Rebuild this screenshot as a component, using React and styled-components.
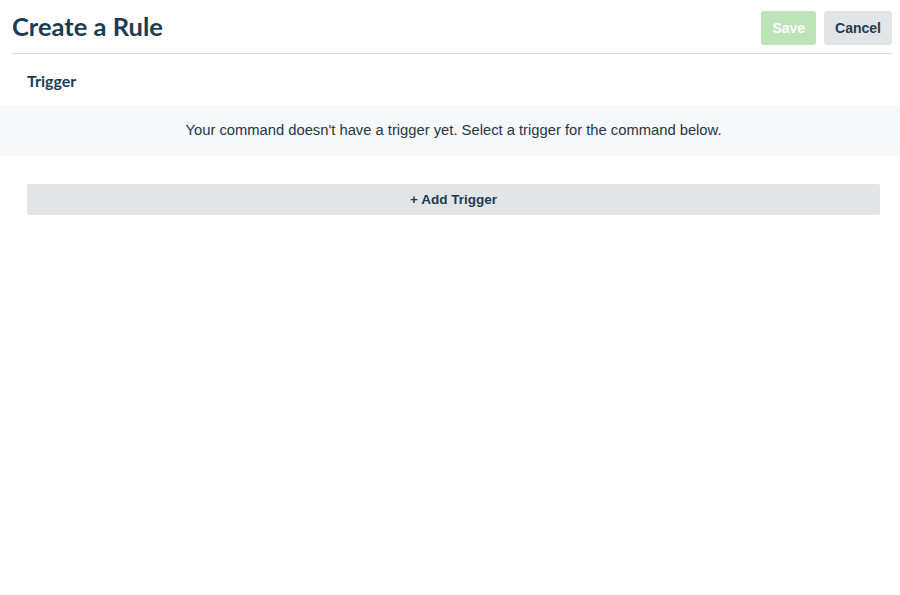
import React from "react";
import styled, { createGlobalStyle } from "styled-components";

const GlobalStyle = createGlobalStyle`
  html, body {
    margin: 0;
    padding: 0;
    background: #ffffff;
  }
  body {
    font-family: "Liberation Sans", Arial, sans-serif;
    color: #1f3b53;
  }
`;

const Page = styled.div`
  width: 900px;
  height: 595px;
  box-sizing: border-box;
  padding: 0 8px 0 12px;
`;

const Header = styled.header`
  display: flex;
  align-items: flex-end;
  justify-content: space-between;
  height: 54px;
  padding-bottom: 8px;
  box-sizing: border-box;
  border-bottom: 1px solid #dcdfe3;
`;

const Title = styled.h1`
  margin: 0 0 4px;
  font-family: Lato, "Open Sans", sans-serif;
  font-weight: 700;
  font-size: 25.5px;
  line-height: 30px;
  color: #1f3b53;
`;

const Actions = styled.div`
  display: flex;
  gap: 8px;
`;

const Button = styled.button`
  height: 34px;
  padding: 0 11px;
  border: none;
  border-radius: 3px;
  font-family: "Liberation Sans", Arial, sans-serif;
  font-weight: 700;
  font-size: 14px;
  background: ${(p) => (p.$primary ? "#bde3b8" : "#e2e5e8")};
  color: ${(p) => (p.$primary ? "#ffffff" : "#1f3b53")};
  cursor: ${(p) => (p.$primary ? "default" : "pointer")};
`;

const Section = styled.section`
  padding: 0 12px 0 15px;
`;

const SectionTitle = styled.h2`
  margin: 0;
  padding: 17px 0 0;
  height: 36px;
  box-sizing: border-box;
  font-family: Lato, "Open Sans", sans-serif;
  font-weight: 700;
  font-size: 16px;
  line-height: 20px;
  color: #1f3b53;
`;

const Notice = styled.div`
  margin: 16px -27px 0 -27px;
  height: 50px;
  display: flex;
  align-items: center;
  justify-content: center;
  background: #f7f8f9;
  font-size: 14.75px;
  color: #22374c;
  padding-bottom: 2px;
  box-sizing: border-box;
`;

const AddButton = styled.button`
  display: block;
  width: 100%;
  margin-top: 28px;
  height: 31px;
  border: none;
  border-radius: 2px;
  background: #e2e5e8;
  font-family: "Liberation Sans", Arial, sans-serif;
  font-weight: 700;
  font-size: 13.5px;
  color: #1f3b53;
  cursor: pointer;
`;

export default function App() {
  return (
    <>
      <GlobalStyle />
      <Page>
        <Header>
          <Title>Create a Rule</Title>
          <Actions>
            <Button $primary disabled>
              Save
            </Button>
            <Button>Cancel</Button>
          </Actions>
        </Header>
        <Section>
          <SectionTitle>Trigger</SectionTitle>
          <Notice>
            Your command doesn't have a trigger yet. Select a trigger for the
            command below.
          </Notice>
          <AddButton>+ Add Trigger</AddButton>
        </Section>
      </Page>
    </>
  );
}
